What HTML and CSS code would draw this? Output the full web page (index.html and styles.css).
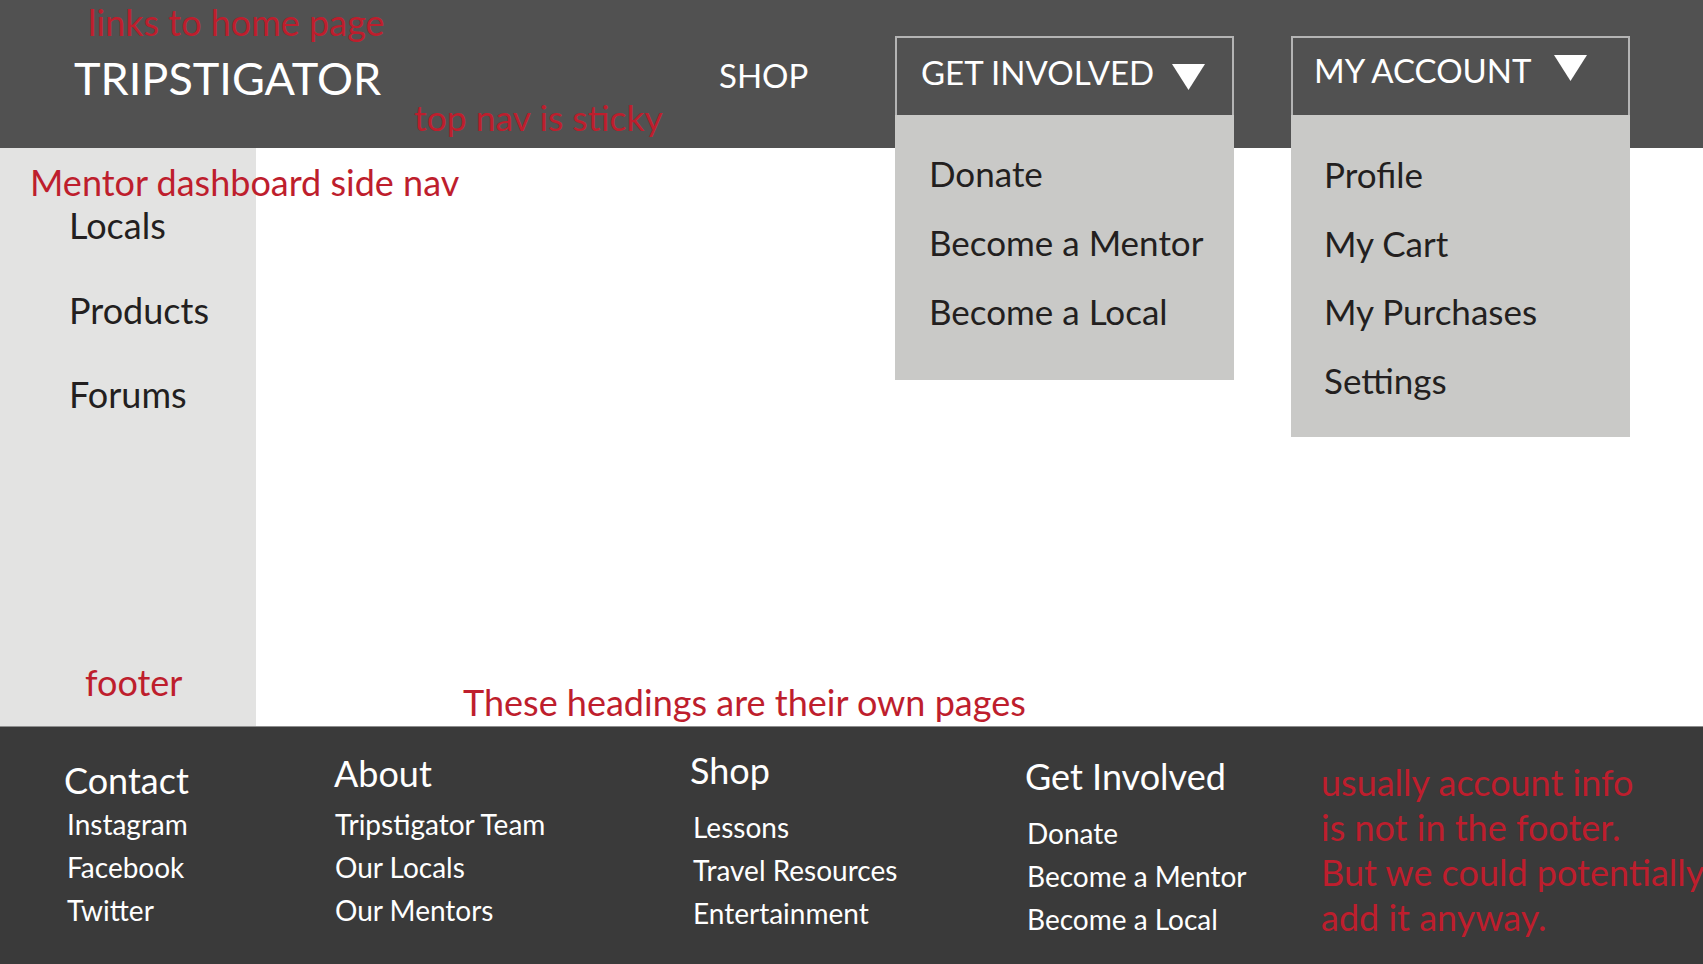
FILE: index.html
```html
<!DOCTYPE html>
<html lang="en">
<head>
<meta charset="utf-8">
<title>Tripstigator – Mentor dashboard wireframe</title>
<link rel="stylesheet" href="styles.css">
</head>
<body>
<div class="page">
  <header class="topbar">
    <span class="note note-home">links to home page</span>
    <span class="note note-sticky">top nav is sticky</span>
    <div class="brand"><a class="logo" href="#">TRIPSTIGATOR</a></div>
    <nav class="topnav">
      <a class="nav-link" href="#">SHOP</a>
      <div class="menu menu-involved">
        <div class="menu-btn">
          <span class="menu-label">GET INVOLVED</span>
          <svg class="caret" viewBox="0 0 33 26" width="33" height="26"><polygon points="0,0 33,0 16.5,26" fill="#ffffff"/></svg>
        </div>
        <ul class="menu-panel">
          <li>Donate</li>
          <li>Become a Mentor</li>
          <li>Become a Local</li>
        </ul>
      </div>
      <div class="menu menu-account">
        <div class="menu-btn">
          <span class="menu-label">MY ACCOUNT</span>
          <svg class="caret" viewBox="0 0 33 26" width="33" height="26"><polygon points="0,0 33,0 16.5,26" fill="#ffffff"/></svg>
        </div>
        <ul class="menu-panel">
          <li>Profile</li>
          <li>My Cart</li>
          <li>My Purchases</li>
          <li>Settings</li>
        </ul>
      </div>
    </nav>
  </header>

  <div class="workspace">
    <span class="note note-side">Mentor dashboard side nav</span>
    <aside class="sidenav">
      <ul class="side-links">
        <li>Locals</li>
        <li>Products</li>
        <li>Forums</li>
      </ul>
      <span class="note note-footer">footer</span>
    </aside>
    <main class="content">
      <span class="note note-pages">These headings are their own pages</span>
    </main>
  </div>

  <footer class="site-footer">
    <section class="fcol fcol-contact">
      <h3>Contact</h3>
      <ul>
        <li>Instagram</li>
        <li>Facebook</li>
        <li>Twitter</li>
      </ul>
    </section>
    <section class="fcol fcol-about">
      <h3>About</h3>
      <ul>
        <li>Tripstigator Team</li>
        <li>Our Locals</li>
        <li>Our Mentors</li>
      </ul>
    </section>
    <section class="fcol fcol-shop">
      <h3>Shop</h3>
      <ul>
        <li>Lessons</li>
        <li>Travel Resources</li>
        <li>Entertainment</li>
      </ul>
    </section>
    <section class="fcol fcol-involved">
      <h3>Get Involved</h3>
      <ul>
        <li>Donate</li>
        <li>Become a Mentor</li>
        <li>Become a Local</li>
      </ul>
    </section>
    <p class="note note-account">usually account info<br>is not in the footer.<br>But we could potentially<br>add it anyway.</p>
  </footer>
</div>
</body>
</html>
```

FILE: styles.css
```css
html, body {
  margin: 0;
  padding: 0;
}

body {
  font-family: "Lato", "Open Sans", "Liberation Sans", sans-serif;
  font-weight: 400;
  color: #231f20;
  background: #ffffff;
  overflow: hidden;
}

.page {
  display: flex;
  flex-direction: column;
  height: 964px;
  width: 1703px;
}

ul {
  list-style: none;
  margin: 0;
  padding: 0;
}

a {
  color: inherit;
  text-decoration: none;
}

/* ---------- annotations ---------- */
.note {
  color: #be1e2d;
  line-height: 1.2;
  white-space: nowrap;
}

.note-home {
  position: absolute;
  left: 88px;
  top: 1px;
  font-size: 36px;
}

.note-sticky {
  position: absolute;
  left: 414px;
  top: 97px;
  font-size: 35.5px;
}

.note-side {
  position: absolute;
  left: 30px;
  top: 13px;
  font-size: 36px;
}

/* ---------- top bar ---------- */
.topbar {
  position: relative;
  display: flex;
  align-items: flex-start;
  height: 148px;
  flex: none;
  box-sizing: border-box;
  padding-left: 74px;
  background: #515151;
  color: #ffffff;
}

.brand {
  flex: none;
  width: 645px;
  padding-top: 51px;
}

.logo {
  font-size: 45px;
  line-height: 54px;
}

.topnav {
  display: flex;
  align-items: flex-start;
}

.nav-link {
  flex: none;
  width: 176px;
  padding-top: 55px;
  font-size: 33px;
  line-height: 40px;
}

.menu {
  position: relative;
  flex: none;
  width: 339px;
  margin-top: 36px;
}

.menu-account {
  margin-left: 57px;
}

.menu-btn {
  display: flex;
  align-items: flex-start;
  height: 79px;
  box-sizing: border-box;
  border: 2px solid #b4b4b4;
  border-bottom: none;
}

.menu-label {
  line-height: 40px;
}

.menu-involved .menu-btn {
  padding: 14px 0 0 24px;
  font-size: 33px;
}

.menu-involved .caret {
  margin: 12px 0 0 18px;
}

.menu-account .menu-btn {
  padding: 12px 0 0 21px;
  font-size: 33px;
}

.menu-account .caret {
  margin: 5px 0 0 22px;
}

.menu-panel {
  position: absolute;
  z-index: 2;
  top: 100%;
  left: 0;
  right: 0;
  box-sizing: border-box;
  background: #c9c9c7;
  color: #231f20;
  font-size: 35px;
}

.menu-involved .menu-panel {
  height: 265px;
  padding: 24px 0 0 34px;
  line-height: 69px;
}

.menu-account .menu-panel {
  height: 322px;
  padding: 25px 0 0 33px;
  line-height: 68.5px;
}

/* ---------- workspace ---------- */
.workspace {
  position: relative;
  display: flex;
  flex: none;
  height: 578px;
}

.sidenav {
  display: flex;
  flex-direction: column;
  flex: none;
  width: 256px;
  background: #e3e3e2;
}

.side-links {
  padding: 35px 0 0 69px;
  font-size: 36px;
  line-height: 84.5px;
}

.note-footer {
  margin-top: auto;
  padding: 0 0 22px 85px;
  font-size: 36px;
}

.content {
  flex: 1;
  display: flex;
  flex-direction: column;
  justify-content: flex-end;
  padding: 0 0 2px 207px;
}

.note-pages {
  font-size: 36px;
}

/* ---------- footer ---------- */
.site-footer {
  flex: 1;
  display: grid;
  grid-template-columns: 270px 356px 335px 296px 1fr;
  align-items: start;
  padding-left: 64px;
  border-top: 1px solid #8e8e8e;
  background: #3a3a3a;
  color: #ffffff;
  overflow: hidden;
}

.fcol h3 {
  margin: 0;
  font-size: 36px;
  line-height: 44px;
  font-weight: 400;
}

.fcol ul {
  font-size: 28px;
  line-height: 43px;
}

.fcol-contact { padding-top: 31px; }
.fcol-contact ul { margin-top: 1px; padding-left: 3px; }

.fcol-about { padding-top: 24px; }
.fcol-about ul { margin-top: 8px; padding-left: 1px; }

.fcol-shop { padding-top: 21px; }
.fcol-shop ul { margin-top: 14px; padding-left: 3px; }

.fcol-involved { padding-top: 27px; }
.fcol-involved ul { margin-top: 14px; padding-left: 2px; }

.note-account {
  margin: 0;
  padding-top: 33px;
  font-size: 36px;
  line-height: 45px;
}
```
